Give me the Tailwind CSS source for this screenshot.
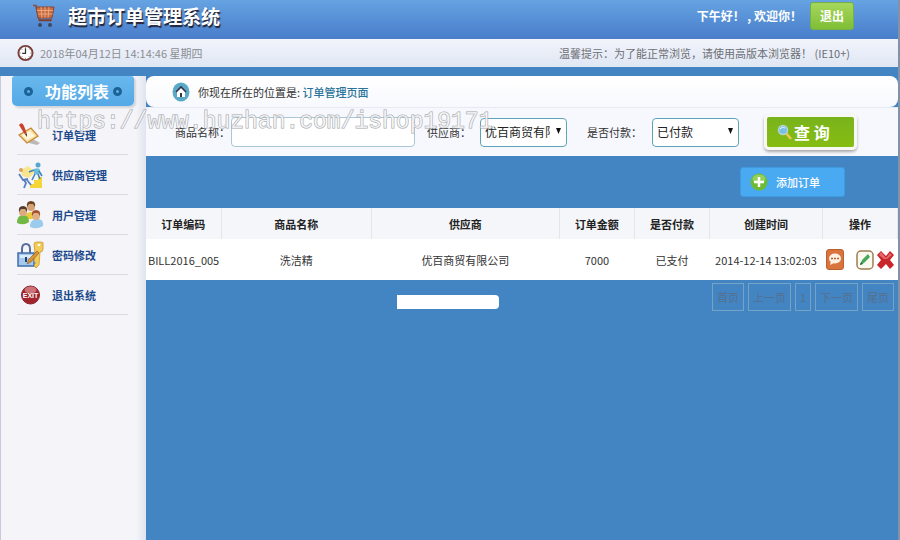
<!DOCTYPE html>
<html lang="zh-CN">
<head>
    <meta charset="UTF-8">
    <meta name="viewport" content="width=device-width, initial-scale=1.0">
    <title>超市订单管理系统</title>
    <script src="https://cdn.jsdelivr.net/npm/@tailwindcss/browser@4"></script>
</head>
<body class="relative min-h-screen flex flex-col bg-[#4384c2] border-r-2 border-[#8492a8] font-['Noto_Sans_CJK_SC',sans-serif] text-[11px] leading-4 text-[#333]">

    <!-- Header -->
    <header class="h-[39px] pl-8 pr-11 flex items-start justify-between bg-linear-to-b from-[#66a3e2] to-[#497dca] text-white font-bold">
        <div class="flex items-center gap-3 pt-1">
            <svg class="w-6 h-6" viewBox="0 0 24 24" fill="none">
                <path d="M1 1.500h3l3 14.500h13" stroke="#8a4a3c" stroke-width="1.500"/>
                <path d="M4 3h18l-2 11H6z" fill="#c96b42" stroke="#874532"/>
                <path d="M5 6.500h16M6 10h14.500M9 3l1 11M13 3v11M17 3l-1 11" stroke="#f3b48a" stroke-width=".8"/>
                <path d="M7 16.500h12" stroke="#7a3d30" stroke-width="1.500"/>
                <circle cx="8" cy="21" r="2" fill="#3b4964"/>
                <circle cx="18" cy="21" r="2" fill="#3b4964"/>
            </svg>
            <h1 class="text-[19px] leading-6 text-shadow-[1px_2px_1px_#223]">超市订单管理系统</h1>
        </div>
        <div class="flex items-center gap-2 pt-[2px]">
            <p class="text-[12px]">下午好！ , 欢迎你！</p>
            <button type="button" class="w-[44px] h-7 rounded-[3px] border border-[#74b04a] bg-linear-to-b from-[#a5d75c] to-[#7fbe34] text-[12px]">退出</button>
        </div>
    </header>

    <!-- Time and notice -->
    <section class="h-7 pl-[17px] pr-12 flex items-center justify-between bg-linear-to-b from-[#f3f4fc] to-[#dfe7f3] text-[#8b8e93]">
        <div class="flex items-center gap-[6px]">
            <svg class="w-[17px] h-[18px]" viewBox="0 0 18 18">
                <circle cx="9" cy="9" r="7.500" fill="#fff" stroke="#7b3f3b" stroke-width="2"/>
                <path d="M9 2.500v1.500M9 14v1.500M2.500 9H4M14 9h1.500M4.500 4.500l1 1M13.500 4.500l-1 1M4.500 13.500l1-1M13.500 13.500l-1-1" stroke="#777" stroke-width=".9"/>
                <path d="M9 4v5.500H5.500" fill="none" stroke="#333" stroke-width="1.300"/>
            </svg>
            <span>2018年04月12日 14:14:46 星期四</span>
        </div>
        <p class="text-[#6d6f74]">温馨提示：为了能正常浏览，请使用高版本浏览器！ (IE10+)</p>
    </section>

    <div class="flex-1 flex pt-[9px]">
        <!-- Sidebar -->
        <aside class="w-[146px] shrink-0 bg-linear-to-r from-[#f5f4f8] from-93% to-[#dfe4ef] border-l border-[#c5cbdb]">
            <h2 class="ml-[11px] w-[122px] h-[30px] px-3 flex items-center gap-3 rounded-b-[5px] rounded-t-[3px] bg-linear-to-b from-[#69b8ee] to-[#54a9e6] text-[16px] font-bold text-white shadow-[2px_2px_2px_#d0d4da]">
                <span class="w-[9px] h-[9px] rounded-full border-3 border-[#1c6297]"></span>
                <span class="flex-1 flex items-center justify-between whitespace-nowrap">
                    功能列表
                    <span class="w-[9px] h-[9px] rounded-full border-3 border-[#1c6297]"></span>
                </span>
            </h2>
            <nav class="mt-[9px] ml-4 mr-[18px] text-[#1c4a8c] font-bold">
                <a href="#" class="h-10 flex items-center gap-2 border-b border-[#dcdce2]">
                    <svg class="w-[27px] h-7" viewBox="0 0 27 28">
                        <path d="M8 21l12 3 3-2-9-5z" fill="#bbb8b8"/>
                        <path d="M2 14L14 7l7 8-11 7z" fill="#f9dfa0" stroke="#c58a35" stroke-width="1.300"/>
                        <path d="M5 14l8-4 5 5-8 4z" fill="#fff6dc"/>
                        <path d="M2 4q3-4 5 1l3 8-3-1z" fill="#c8432d"/>
                        <path d="M7 12l3 1 0 3z" fill="#69412d"/>
                    </svg>
                    订单管理
                </a>
                <a href="#" class="h-10 flex items-center gap-2 border-b border-[#dcdce2]">
                    <svg class="w-[27px] h-7" viewBox="0 0 27 28">
                        <path d="M13 27v-4h4v-4h4v-3h4v11z" fill="#f4d736"/>
                        <path d="M4 9l7-4 7 6-6 6-7-2z" fill="#f8e58d"/>
                        <circle cx="4" cy="9" r="2" fill="#d9a263"/>
                        <circle cx="21" cy="4" r="2.500" fill="#58a7cf"/>
                        <path d="M17 8q5-2 6 1l-1 5-5-1z" fill="#6bbddd"/>
                        <path d="M22 10l3 5M18 13l-3 6M21 13l2 5M17 9l-5 2" stroke="#4284b9" stroke-width="1.600" fill="none"/>
                        <path d="M2 13l4 6 5-1M7 19l2 3-2 5M10 19l4 5" stroke="#557fc0" stroke-width="1.800" fill="none"/>
                    </svg>
                    供应商管理
                </a>
                <a href="#" class="h-10 flex items-center gap-2 border-b border-[#dcdce2]">
                    <svg class="w-[27px] h-7" viewBox="0 0 27 28">
                        <path d="M8 18q0-7 6-7t6 7z" fill="#eccb3c"/>
                        <circle cx="14" cy="6" r="4" fill="#d7a274"/>
                        <path d="M10 6q-1-6 4-6t4 6l-2-3h-4z" fill="#6b4426"/>
                        <path d="M0 22q0-8 6-8t6 7q-5 4-12 1z" fill="#71b844"/>
                        <circle cx="6" cy="11" r="4" fill="#dcaa80"/>
                        <path d="M2 11q-1-6 4-6t4 6l-2-3H4z" fill="#503c2c"/>
                        <path d="M13 26q0-8 7-8t6 7q-6 4-13 1z" fill="#9bcbed"/>
                        <circle cx="19" cy="15" r="4" fill="#dfb084"/>
                        <path d="M15 15q-1-6 4-6t4 6l-2-3h-4z" fill="#a2522b"/>
                    </svg>
                    用户管理
                </a>
                <a href="#" class="h-10 flex items-center gap-2 border-b border-[#dcdce2]">
                    <svg class="w-[27px] h-7" viewBox="0 0 27 28">
                        <path d="M5 13V8q0-5 4-5t4 5v5" fill="none" stroke="#586f99" stroke-width="2"/>
                        <path d="M1 12h16v13H1z" fill="#a4c9ee" stroke="#416da8" stroke-width="1.500"/>
                        <path d="M3 14h12v3H3z" fill="#d9ebfa"/>
                        <path d="M9 16v5" stroke="#263c60" stroke-width="2"/>
                        <path d="M17 3q0-2 3-2h4q3 0 2 3v4q0 3-3 3l-1 13-3 3-2-3 2-2-2-2 1-8z" fill="#f3cc56" stroke="#c79736" stroke-width=".8"/>
                        <path d="M10 23l2-5 8-8 2 2-8 9z" fill="#d99235" stroke="#855a2d" stroke-width=".6"/>
                        <circle cx="22" cy="4" r="1.300" fill="#fff"/>
                    </svg>
                    密码修改
                </a>
                <a href="#" class="h-10 flex items-center gap-2 border-b border-[#dcdce2]">
                    <svg class="w-[27px] h-7" viewBox="0 0 27 28">
                        <circle cx="13.500" cy="14" r="9" fill="#a3242c" stroke="#86252d"/>
                        <ellipse cx="13.500" cy="9" rx="6" ry="3.500" fill="#cb7377"/>
                        <text x="13.500" y="17" text-anchor="middle" font-family="Liberation Sans" font-size="7" font-weight="bold" fill="#fff">EXIT</text>
                    </svg>
                    退出系统
                </a>
            </nav>
        </aside>

        <main class="flex-1 min-w-0">
            <!-- Location -->
            <div class="h-[31px] pl-[26px] flex items-center gap-2 rounded-lg bg-linear-to-b from-white to-[#f8f9fd]">
                <svg class="w-[18px] h-5" viewBox="0 0 18 20">
                    <ellipse cx="9" cy="10" rx="8.500" ry="9.500" fill="#5aaac7"/>
                    <path d="M5 9l4-4 4 4v6H5z" fill="#fff"/>
                    <path d="M4 10l5-5 5 5" fill="none" stroke="#32324c" stroke-width="1.600"/>
                    <path d="M8 11h2v4H8z" fill="#32324c"/>
                </svg>
                <p>你现在所在的位置是: <a href="#" class="font-medium text-[#2a7399]">订单管理页面</a></p>
            </div>

            <!-- Search -->
            <form class="h-[49px] pl-[29px] flex items-center bg-[#f6f8fd] border-t border-[#e6eaf2]">
                <label for="productName" class="w-14 shrink-0">商品名称：</label>
                <input id="productName" type="text" class="w-[184px] h-[30px] px-2 rounded-[4px] border border-[#a9c7d6] bg-white">
                <label for="provider" class="ml-3 w-[53px] shrink-0">供应商：</label>
                <div class="relative shrink-0">
                    <select id="provider" class="w-[87px] h-[29px] pl-1 pr-4 appearance-none rounded-[4px] border border-[#5fa3bb] bg-white text-[12px] text-[#222] text-clip">
                        <option>优百商贸有限公司</option>
                    </select>
                    <svg class="absolute right-[6px] top-[10px] w-[5px] h-[6px] pointer-events-none" viewBox="0 0 5 6"><path d="M0 0h5L2.500 6z" fill="#111"/></svg>
                </div>
                <label for="isPayment" class="ml-5 w-[65px] shrink-0">是否付款：</label>
                <div class="relative shrink-0">
                    <select id="isPayment" class="w-[87px] h-[29px] pl-1 pr-4 appearance-none rounded-[4px] border border-[#5fa3bb] bg-white text-[12px] text-[#222]">
                        <option>已付款</option>
                    </select>
                    <svg class="absolute right-[6px] top-[10px] w-[5px] h-[6px] pointer-events-none" viewBox="0 0 5 6"><path d="M0 0h5L2.500 6z" fill="#111"/></svg>
                </div>
                <button type="button" class="ml-[25px] w-[93px] h-9 shrink-0 flex items-center justify-start gap-[2px] pl-[10px] rounded-[5px] border-3 border-[#f7f8f3] bg-linear-to-b from-[#78b31c] to-[#86bd10] text-[16px] font-bold text-white shadow-[0_2px_3px_#aaa]">
                    <svg class="w-[15px] h-4" viewBox="0 0 15 16">
                        <path d="M9 9l5 6" stroke="#f0c64b" stroke-width="2.500"/>
                        <circle cx="6" cy="6" r="4.500" fill="#79bfe2" stroke="#b4d5d5" stroke-width="1.500"/>
                        <path d="M3 5q2-3 5-1" stroke="#e9f8ff" fill="none"/>
                    </svg>
                    查 询
                </button>
            </form>

            <div class="h-[52px] pr-[53px] flex items-center justify-end">
                <a href="#" class="w-[105px] h-[30px] pl-[9px] flex items-center gap-2 rounded-[3px] border border-[#3f9be0] bg-[#49a9f1] font-medium text-white">
                    <svg class="w-[18px] h-[18px]" viewBox="0 0 18 18">
                        <circle cx="9" cy="9" r="8.500" fill="#6dbb35"/>
                        <ellipse cx="9" cy="6" rx="6.500" ry="4.500" fill="#94d05d"/>
                        <path d="M9 4v10M4 9h10" stroke="#fff" stroke-width="2.500"/>
                    </svg>
                    添加订单
                </a>
            </div>

            <!-- Bills -->
            <table class="w-full table-fixed text-center bg-white">
                <thead>
                    <tr class="h-[31px] bg-[#f5f6fa] text-[#222] *:font-bold *:border-r *:border-[#e3e6ed]">
                        <th class="w-[10%]">订单编码</th>
                        <th class="w-[20%]">商品名称</th>
                        <th class="w-[25%]">供应商</th>
                        <th class="w-[10%]">订单金额</th>
                        <th class="w-[10%]">是否付款</th>
                        <th class="w-[15%]">创建时间</th>
                        <th class="w-[10%]">操作</th>
                    </tr>
                </thead>
                <tbody>
                    <tr class="h-[41px]">
                        <td>BILL2016_005</td>
                        <td>洗洁精</td>
                        <td>优百商贸有限公司</td>
                        <td>7000</td>
                        <td>已支付</td>
                        <td>2014-12-14 13:02:03</td>
                        <td>
                            <div class="flex items-center pl-1">
                                <a href="#" aria-label="查看">
                                    <svg class="w-[18px] h-[21px]" viewBox="0 0 18 21">
                                        <rect x=".5" y=".5" width="17" height="20" rx="2.500" fill="#d9743c" stroke="#b9602f"/>
                                        <ellipse cx="9" cy="9.500" rx="6" ry="5" fill="#fff1e4"/>
                                        <path d="M5 12l-1 4 4-2z" fill="#fff1e4"/>
                                        <path d="M5 9.500h2M8 9.500h2M11 9.500h2" stroke="#b9602f" stroke-width="1.500"/>
                                    </svg>
                                </a>
                                <a href="#" aria-label="修改" class="ml-3">
                                    <svg class="w-[18px] h-5" viewBox="0 0 18 20">
                                        <rect x="1" y="1" width="16" height="18" rx="4" fill="#fbfaf0" stroke="#a07c53" stroke-width="1.500"/>
                                        <path d="M4 15l2-5 6-6 2 3-6 6z" fill="#46a85a"/>
                                        <path d="M4 15l1-3 2 2z" fill="#245e38"/>
                                    </svg>
                                </a>
                                <a href="#" aria-label="删除" class="ml-[3px]">
                                    <svg class="w-[17px] h-[18px]" viewBox="0 0 17 18">
                                        <path d="M4 0l5 5 4-5 4 4-4 5 4 5-4 4-4-5-5 5-4-4 4-5-4-5z" fill="#c8262b"/>
                                        <path d="M4 1l5 6 4-5 2 2-5 4H7L2 4z" fill="#e4696b"/>
                                    </svg>
                                </a>
                            </div>
                        </td>
                    </tr>
                </tbody>
            </table>

            <!-- Pager -->
            <div class="pt-[3px] pl-[251px] pr-1 flex items-end justify-between">
                <div class="mb-[2px] w-[102px] h-[14px] rounded-r-[4px] bg-white"></div>
                <ul class="flex gap-1 text-[#55708e] *:border *:border-[#75a3c6] *:h-7 *:px-1 *:leading-[26px]">
                    <li><a href="#">首页</a></li>
                    <li><a href="#">上一页</a></li>
                    <li><a href="#">1</a></li>
                    <li><a href="#">下一页</a></li>
                    <li><a href="#">尾页</a></li>
                </ul>
            </div>
        </main>
    </div>

    <!-- Watermark -->
    <div class="absolute left-[37px] top-[106px] font-['Liberation_Mono',monospace] text-[23px] leading-8 text-white/70 [-webkit-text-stroke:1px_#a3a6ab] [paint-order:stroke_fill] pointer-events-none">https://www.huzhan.com/ishop19171</div>
</body>
</html>
